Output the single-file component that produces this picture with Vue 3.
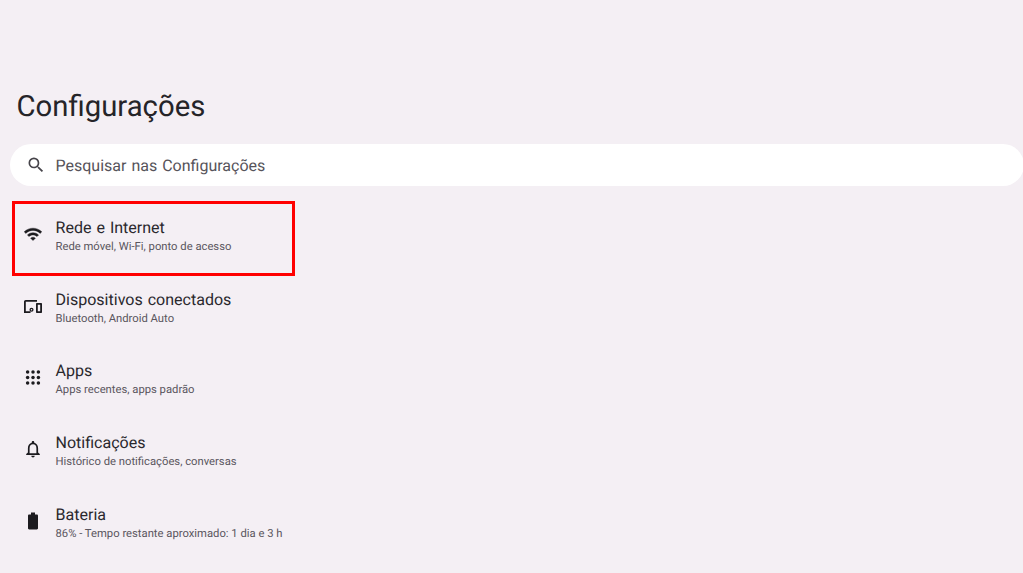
<script setup>
// Linhas da lista de configurações
const rows = [
  { id: 'wifi', title: 'Rede e Internet', sub: 'Rede móvel, Wi-Fi, ponto de acesso', marked: true },
  { id: 'devices', title: 'Dispositivos conectados', sub: 'Bluetooth, Android Auto' },
  { id: 'apps', title: 'Apps', sub: 'Apps recentes, apps padrão' },
  { id: 'bell', title: 'Notificações', sub: 'Histórico de notificações, conversas' },
  { id: 'battery', title: 'Bateria', sub: '86% - Tempo restante aproximado: 1 dia e 3 h' },
]
// Pontos do ícone de apps (grade 3x3)
const dots = [6.6, 12, 17.4]
</script>

<template>
  <div class="page">
    <h1 class="title">Configurações</h1>

    <div class="search">
      <svg class="search-icon" viewBox="0 0 24 24" width="20" height="20">
        <path d="M15.5 14h-.79l-.28-.27A6.47 6.47 0 0 0 16 9.5 6.5 6.5 0 1 0 9.5 16c1.61 0 3.09-.59 4.23-1.57l.27.28v.79l5 4.99L20.49 19l-4.99-5zm-6 0C7.01 14 5 11.99 5 9.5S7.01 5 9.5 5 14 7.01 14 9.5 11.99 14 9.5 14z" />
      </svg>
      <span class="search-text">Pesquisar nas Configurações</span>
    </div>

    <div class="list">
      <div v-for="row in rows" :key="row.id" class="row">
        <div v-if="row.marked" class="marker"></div>
        <div class="icon">
          <svg v-if="row.id === 'wifi'" viewBox="0 0 24 24" width="24" height="24">
            <path d="M1 9l2 2c4.97-4.97 13.03-4.97 18 0l2-2C16.93 2.93 7.08 2.93 1 9zm8 8l3 3 3-3c-1.65-1.66-4.34-1.66-6 0zm-4-4l2 2c2.76-2.76 7.24-2.76 10 0l2-2C15.14 9.14 8.87 9.14 5 13z" transform="translate(2.4 2.6) scale(.8)" stroke="#1c1b1f" stroke-width=".5" />
          </svg>
          <svg v-else-if="row.id === 'devices'" viewBox="0 0 24 24" width="24" height="24">
            <path d="M4.800 7.700H16V6H4.700C3.800 6 3 6.800 3 7.700V19h6.500v-1.800H4.800V7.700z" />
            <path d="M15.800 9h4.400c.6 0 .8.300.8.800v8.400c0 .5-.2.800-.8.800h-4.400c-.6 0-.8-.3-.8-.8V9.800c0-.5.200-.8.800-.8zm1 1.800v6.400h2.400v-6.400h-2.400z" />
            <circle cx="10.500" cy="15.700" r="1.400" fill="none" stroke="#1c1b1f" stroke-width="1.300" />
          </svg>
          <svg v-else-if="row.id === 'apps'" viewBox="0 0 24 24" width="24" height="24">
            <g v-for="y in dots" :key="y">
              <circle v-for="x in dots" :key="x" :cx="x" :cy="y + 0.5" r="1.750" />
            </g>
          </svg>
          <svg v-else-if="row.id === 'bell'" viewBox="0 0 24 24" width="24" height="24">
            <path d="M12 22c1.100 0 2-.9 2-2h-4c0 1.100.9 2 2 2zm6-6v-5c0-3.070-1.640-5.640-4.500-6.320V4c0-.83-.67-1.500-1.500-1.500s-1.500.67-1.500 1.500v.68C7.630 5.360 6 7.920 6 11v5l-2 2v1h16v-1l-2-2zm-2 1H8v-6c0-2.480 1.510-4.500 4-4.500s4 2.020 4 4.500v6z" transform="translate(1.800 1.800) scale(.85)" />
          </svg>
          <svg v-else viewBox="0 0 24 24" width="24" height="24">
            <path d="M15.800 6H14V4h-4v2H8.200C7.500 6 7 6.500 7 7.200v12.600c0 .7.500 1.200 1.200 1.200h7.600c.7 0 1.200-.5 1.200-1.200V7.200c0-.7-.5-1.200-1.200-1.200z" transform="translate(0 -.500)" />
          </svg>
        </div>
        <div class="text">
          <div class="row-title">{{ row.title }}</div>
          <div class="row-sub">{{ row.sub }}</div>
        </div>
      </div>
    </div>
  </div>
</template>

<style scoped>
.page {
  height: 573px;
  overflow: hidden;
  background: #f4eff4;
  font-family: Roboto, "Liberation Sans", sans-serif;
  color: #1c1b1f;
  padding-top: 89px;
  box-sizing: border-box;
  text-rendering: geometricPrecision;
}
.title {
  margin: 0 0 0 16.5px;
  font-size: 29.3px;
  font-weight: 400;
  line-height: 36px;
  color: #252428;
}
.search {
  display: flex;
  align-items: center;
  height: 42px;
  margin: 19px -1px 0 10px;
  background: #fff;
  border-radius: 21px;
}
.search-icon {
  margin-left: 16px;
  fill: #46444a;
}
.search-text {
  margin-left: 9.5px;
  font-size: 16px;
  word-spacing: 1px;
  color: #56535a;
}
.list {
  margin-top: 14.5px;
}
.row {
  position: relative;
  display: flex;
  align-items: center;
  height: 71.6px;
}
.marker {
  position: absolute;
  left: 12px;
  top: 0.5px;
  width: 283px;
  height: 75px;
  box-sizing: border-box;
  border: 3px solid #ff0000;
}
.icon {
  width: 24px;
  height: 24px;
  margin-left: 21px;
  margin-bottom: 4px;
  fill: #1c1b1f;
}
.icon svg {
  display: block;
}
.text {
  margin-left: 10.5px;
  padding-top: 1px;
}
.row-title {
  font-size: 16.05px;
  line-height: 20px;
  word-spacing: 1px;
  color: #2a282d;
}
.row-sub {
  font-size: 11.25px;
  line-height: 16px;
  margin-top: 1px;
  color: #5a565e;
}
</style>

<style>
html, body {
  background: #f4eff4;
  overflow: hidden;
}
</style>
